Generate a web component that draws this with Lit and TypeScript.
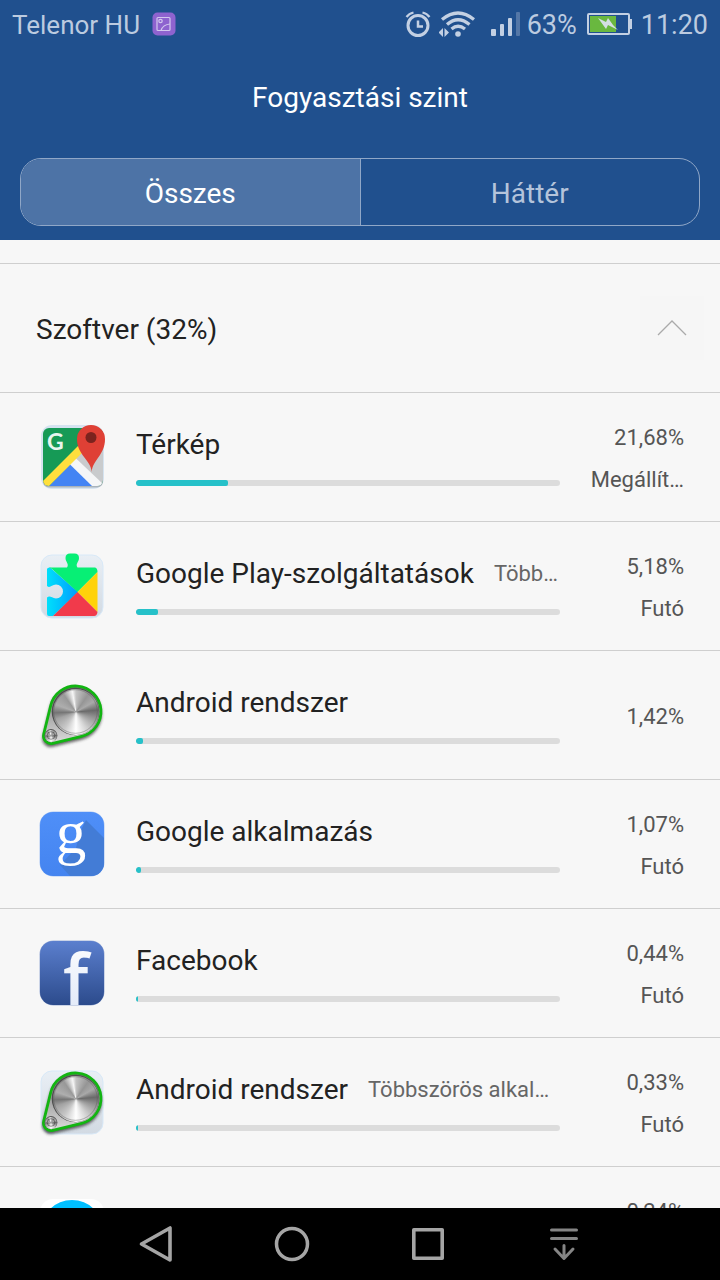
import { LitElement, html, css, nothing, type TemplateResult } from "lit";
import { customElement, property, state } from "lit/decorators.js";
import { classMap } from "lit/directives/class-map.js";
import { styleMap } from "lit/directives/style-map.js";

interface AppUsage {
  name: string;
  note?: string;
  percent: string;
  status?: string;
  fill: number;
  icon: string;
}

const APPS: AppUsage[] = [
  { name: "Térkép", percent: "21,68%", status: "Megállít…", fill: 21.68, icon: "maps" },
  { name: "Google Play-szolgáltatások", note: "Több…", percent: "5,18%", status: "Futó", fill: 5.18, icon: "play" },
  { name: "Android rendszer", percent: "1,42%", fill: 1.65, icon: "system" },
  { name: "Google alkalmazás", percent: "1,07%", status: "Futó", fill: 1.2, icon: "google" },
  { name: "Facebook", percent: "0,44%", status: "Futó", fill: 0.48, icon: "facebook" },
  { name: "Android rendszer", note: "Többszörös alkal…", percent: "0,33%", status: "Futó", fill: 0.48, icon: "systemTile" },
  { name: "", percent: "0,24%", status: "\u00a0", fill: 0.24, icon: "blue" },
];

const tile = html`<svg viewBox="0 0 72 72"><rect x="5" y="5" width="62" height="63" rx="11" fill="url(#tileFill)" stroke="#d8e9f8"/><defs><linearGradient id="tileFill" x1="0" y1="0" x2="0" y2="1"><stop offset="0" stop-color="#e9eff5"/><stop offset="1" stop-color="#d2dae3"/></linearGradient></defs></svg>`;

const knob = html`
  <svg viewBox="0 0 72 72">
    <defs>
      <filter id="soft" x="-20%" y="-20%" width="140%" height="140%"><feGaussianBlur stdDeviation="1.8"/></filter>
      <linearGradient id="plate" x1="0" y1="0" x2="0" y2="1"><stop offset="0" stop-color="#6f6f6f"/><stop offset="1" stop-color="#dcdcdc"/></linearGradient>
    </defs>
    <path d="M7.700 57.200 L14.700 28.500 A25.500 25.500 0 1 1 45.500 59.800 L16.800 66.800 A7.500 7.500 0 0 1 7.700 57.200Z" fill="#333" stroke="#333" stroke-width="2" opacity=".75" filter="url(#soft)"/>
    <path d="M7.700 55.200 L14.700 26.500 A25.500 25.500 0 1 1 45.500 57.300 L16.800 64.300 A7.500 7.500 0 0 1 7.700 55.200Z" fill="url(#plate)" stroke="#12b512" stroke-width="2.800"/>
    <circle cx="39.500" cy="32.500" r="23.800" fill="#4f4f4f"/>
    <foreignObject x="16.500" y="9.500" width="46" height="46"><div class="metal"></div></foreignObject>
    <circle cx="39.500" cy="32.500" r="21.800" fill="none" stroke="#555" stroke-opacity=".4"/>
    <circle cx="15" cy="56.500" r="6.400" fill="#555"/>
    <foreignObject x="9" y="50.500" width="12" height="12"><div class="metal"></div></foreignObject>
    <circle cx="15" cy="56.500" r="3.800" fill="none" stroke="#333" stroke-opacity=".5"/>
  </svg>`;

const ICONS: Record<string, TemplateResult> = {
  maps: html`<svg viewBox="0 0 72 72">
    <defs><clipPath id="mapClip"><rect x="7" y="7" width="60" height="58" rx="6"/></clipPath></defs>
    <rect x="5" y="4" width="63" height="64" rx="11" fill="#d5e3f0"/>
    <rect x="7" y="8" width="60" height="58.500" rx="6" fill="#a9b3bb"/>
    <g clip-path="url(#mapClip)">
      <rect x="7" y="7" width="60" height="60" fill="#169a56"/>
      <path d="M37 38 L52 22 H67 V66 H58Z" fill="#c9cbcd"/>
      <path d="M12 66 L37 40 L62 66Z" fill="#4384f4"/>
      <path d="M32 41.500 L38 35.500 L69 65 H56Z" fill="#f5f6f7"/>
      <path d="M5 62 L48 19 L54 24 L11 67Z" fill="#ffdf3d"/>
    </g>
    <text class="maps-g" x="11" y="29">G</text>
    <path d="M55.700 51 C55 39 41 34 41 18 A14 14 0 0 1 69 18 C69 34 56.500 39 55.700 51Z" fill="#df4035"/>
    <circle cx="55" cy="16.500" r="5.500" fill="#7b231e"/>
  </svg>`,
  play: html`<svg viewBox="0 0 72 72">
    <defs>
      <linearGradient id="pl1" x1="0" y1="0" x2="0" y2="1"><stop offset="0" stop-color="#e9eff5"/><stop offset="1" stop-color="#d2dae3"/></linearGradient>
      <linearGradient id="pl2" x1="0" y1="0" x2="1" y2="0"><stop offset="0" stop-color="#00e0fb"/><stop offset="1" stop-color="#009bff"/></linearGradient>
    </defs>
    <rect x="5" y="5" width="62" height="63" rx="11" fill="url(#pl1)" stroke="#d8e9f8"/>
    <path d="M14 17.500 L42 42 L17 66 H13 Q11 66 11 64 V47.500 C14 45 15.500 48 20 48.500 A7 7 0 0 0 20 34.500 C15.500 35 14 38.500 11 36 V19.500 Q11 17.500 14 17.500Z" fill="url(#pl2)"/>
    <path d="M13 17.500 H31 C33.500 14 29.500 12 29.500 8 Q29.500 3.500 34 3.500 H38.500 Q43 3.500 43 8 C43 12 39 14 41.500 17.500 H59 Q61.500 18 61.500 22 L41.500 42 L16 19Z" fill="#07ef75"/>
    <path d="M61.500 22 V62 L41.500 42Z" fill="#ffd20a"/>
    <path d="M41.500 42 L61.500 62 Q61 66 58 66 H17Z" fill="#f13a4b"/>
  </svg>`,
  system: knob,
  systemTile: html`${tile}${knob}`,
  google: html`<svg viewBox="0 0 72 72">
    <defs>
      <clipPath id="gClip"><rect x="4" y="4" width="64" height="64" rx="13"/></clipPath>
      <linearGradient id="gFill" x1="0" y1="0" x2="0" y2="1"><stop offset="0" stop-color="#4f8ff8"/><stop offset="1" stop-color="#4484f0"/></linearGradient>
    </defs>
    <rect x="3.500" y="3.500" width="65" height="65" rx="14" fill="#a9c6f3"/>
    <g clip-path="url(#gClip)"><rect x="4" y="4" width="64" height="64" fill="url(#gFill)"/><path d="M50 12 L68 30 V68 H34 L24 57 L40 40 L44 24Z" fill="#437cd6"/></g>
    <text class="google-g" x="35" y="45" text-anchor="middle">g</text>
  </svg>`,
  facebook: html`<svg viewBox="0 0 72 72">
    <defs>
      <clipPath id="fClip"><rect x="4" y="4" width="64" height="64" rx="13"/></clipPath>
      <linearGradient id="fFill" x1="0" y1="0" x2="0" y2="1"><stop offset="0" stop-color="#5b7fce"/><stop offset="1" stop-color="#2c4b8c"/></linearGradient>
      <linearGradient id="fText" x1="0" y1="0" x2="0" y2="1"><stop offset="0" stop-color="#fff"/><stop offset="1" stop-color="#dde6f7"/></linearGradient>
    </defs>
    <rect x="3.500" y="3.500" width="65" height="65" rx="14" fill="#9fb1d8"/>
    <g clip-path="url(#fClip)"><rect x="4" y="4" width="64" height="64" fill="url(#fFill)"/>
    <text class="facebook-f" x="27" y="68" fill="url(#fText)">f</text></g>
  </svg>`,
  blue: html`<svg viewBox="0 0 72 72"><rect x="4" y="4" width="64" height="64" rx="13" fill="#fff"/><circle cx="36" cy="36" r="31" fill="#00bfff"/></svg>`,
};

@customElement("usage-row")
export class UsageRow extends LitElement {
  @property({ attribute: false }) app!: AppUsage;

  static styles = css`
    :host { display: block; border-bottom: 1px solid #cfcfcf; }
    .row { display: flex; align-items: center; height: 128px; padding: 0 36px; }
    .icon { display: grid; flex: none; width: 72px; height: 72px; margin-right: 28px; }
    .icon svg { grid-area: 1 / 1; width: 72px; height: 72px; overflow: visible; }
    .metal {
      width: 100%; height: 100%; border-radius: 50%;
      background: conic-gradient(from 0deg, #c4c4c4, #959595 35deg, #a9a9a9 60deg, #6a6a6a 85deg, #999 110deg, #d6d6d6 150deg, #fff 180deg, #c8c8c8 215deg, #a2a2a2 250deg, #757575 268deg, #aeaeae 290deg, #989898 325deg, #f6f6f6 350deg, #c4c4c4 360deg);
    }
    .maps-g { font: 700 23px Lato, sans-serif; fill: #e8f5ee; }
    .google-g { font: 61px "Liberation Serif", serif; fill: #fff; }
    .facebook-f { font: 600 70px "Open Sans", sans-serif; }
    .main { flex: 1; min-width: 0; padding-bottom: 2px; }
    .line { display: flex; align-items: center; gap: 20px; height: 36px; margin-bottom: 18px; white-space: nowrap; }
    .name { font-size: 28px; color: #222; }
    .note { font-size: 22px; color: #666; }
    .bar { height: 6px; border-radius: 3px; background: #dcdcdc; overflow: hidden; }
    .fill { height: 6px; border-radius: 2px; background: #26c1c9; }
    .side { width: 124px; flex: none; padding-top: 4px; font-size: 22px; line-height: 42px; text-align: right; color: #555; white-space: nowrap; }
  `;

  render() {
    const a = this.app;
    return html`<div class="row">
      <div class="icon" aria-hidden="true">${ICONS[a.icon]}</div>
      <div class="main">
        <div class="line"><span class="name">${a.name}</span>${a.note ? html`<span class="note">${a.note}</span>` : nothing}</div>
        <div class="bar"><div class="fill" style=${styleMap({ width: `${a.fill}%` })}></div></div>
      </div>
      <div class="side"><div>${a.percent}</div>${a.status ? html`<div>${a.status}</div>` : nothing}</div>
    </div>`;
  }
}

@customElement("app-root")
export class AppRoot extends LitElement {
  @state() private tab = 0;
  @state() private open = true;

  static styles = css`
    :host {
      display: flex; flex-direction: column; height: 100vh; overflow: hidden;
      background: #f7f7f7; font-family: Roboto, sans-serif; color: #222;
    }
    button { font: inherit; color: inherit; background: none; border: 0; padding: 0; margin: 0; cursor: pointer; }
    svg { display: block; }
    .header { flex: none; background: #20508e; padding-bottom: 14px; }
    .status { display: flex; align-items: center; height: 48px; padding: 0 12px; font-size: 27px; color: #bccbe0; }
    .status span { padding-top: 2px; }
    .carrier { margin-right: 12px; font-size: 26px; }
    .tray { display: flex; align-items: center; margin-left: auto; }
    .wifi { margin-left: 8px; }
    .signal { margin: 0 6px 0 16px; }
    .battery { margin: 0 9px 0 10px; }
    .title { margin: 0; padding: 2px 0 12px; font-size: 28px; font-weight: 400; line-height: 96px; text-align: center; color: #fff; }
    .tabs { display: flex; height: 66px; margin: 0 20px; border: 1px solid #90a7c7; border-radius: 21px; overflow: hidden; }
    .tab { flex: 1; padding-top: 2px; font-size: 28px; color: #b4c4db; }
    .tab + .tab { border-left: 1px solid #90a7c7; }
    .tab.on { background: #4d73a6; color: #fff; }
    .content { flex: 1; min-height: 0; overflow: hidden; padding-top: 23px; }
    .group { display: flex; align-items: center; justify-content: space-between; height: 128px; padding: 0 16px 0 36px; border: solid #cfcfcf; border-width: 1px 0; }
    .group h2 { margin: 0; padding-top: 2px; font-size: 28px; font-weight: 400; }
    .toggle { display: grid; place-items: center; width: 64px; height: 64px; background: #f6f6f6; }
    .nav { flex: none; display: flex; justify-content: center; height: 72px; background: #000; }
    .nav button { display: grid; place-items: center; width: 136px; }
  `;

  render() {
    return html`
      <header class="header">
        <div class="status">
          <span class="carrier">Telenor HU</span>
          <svg width="24" height="24" viewBox="0 0 24 24" fill="none" aria-hidden="true">
            <rect x=".5" y=".5" width="23" height="23" rx="5" fill="#8e63cf"/>
            <g stroke="#d2c8ee" stroke-width="1.200"><rect x="5" y="5.500" width="13" height="13" rx="1"/><circle cx="8.500" cy="9" r="1.700"/><path d="M9 18.500 Q11 12.500 18 12"/></g>
          </svg>
          <div class="tray">
            <svg width="26" height="28" viewBox="0 0 26 28" fill="none" stroke="#c3d0e3" aria-hidden="true">
              <circle cx="13" cy="15.500" r="10" stroke-width="3"/><path d="M13 10.500 V16.500 H18" stroke-width="2.500"/>
              <path d="M1.500 7 Q4 3.500 8.500 2.500 M24.500 7 Q22 3.500 17.500 2.500" stroke-width="2.200"/>
            </svg>
            <svg class="wifi" width="36" height="28" viewBox="0 0 36 28" fill="none" stroke="#c3d0e3" aria-hidden="true">
              <path d="M3 9.500 Q19 -3.500 35 9.500" stroke-width="3.300"/><path d="M8 14.500 Q19 5 30.500 14.500" stroke-width="3.300"/><path d="M12.500 19 Q19 13.500 26 19" stroke-width="3.300"/>
              <circle cx="19" cy="24" r="2.800" fill="#c3d0e3" stroke="none"/>
              <path d="M-.5 22.500 L4 18 V27Z M5.500 18 L10 22.500 L5.500 27Z" fill="#c3d0e3" stroke="none"/>
            </svg>
            <svg class="signal" width="30" height="26" viewBox="0 0 30 26" fill="#c3d0e3" aria-hidden="true">
              <rect x="0" y="18" width="5" height="7" rx="1"/><rect x="9" y="13" width="4" height="12" rx="1"/><rect x="17" y="7" width="4" height="18" rx="1"/><rect x="25" y="1" width="4" height="24" rx="1" fill="#5477a7"/>
            </svg>
            <span>63%</span>
            <svg class="battery" width="45" height="22" viewBox="0 0 45 22" aria-hidden="true">
              <rect x="1" y="1" width="41" height="20" rx="1" fill="none" stroke="#c3d0e3" stroke-width="2"/><rect x="43" y="6" width="2" height="10" fill="#c3d0e3"/>
              <rect x="3" y="3" width="26" height="16" fill="#69b83f"/><path d="M11 5 L19 9 L21 5 L26 12 L31 17 L21 12 L19 16Z" fill="#d3dfe2"/>
            </svg>
            <span>11:20</span>
          </div>
        </div>
        <h1 class="title">Fogyasztási szint</h1>
        <div class="tabs" role="tablist">
          ${["Összes", "Háttér"].map((label, i) => html`<button role="tab" aria-selected=${this.tab === i} class=${classMap({ tab: true, on: this.tab === i })} @click=${() => (this.tab = i)}>${label}</button>`)}
        </div>
      </header>
      <main class="content">
        <div class="group">
          <h2>Szoftver (32%)</h2>
          <button class="toggle" aria-label="Szoftver" aria-expanded=${this.open} @click=${() => (this.open = !this.open)}>
            <svg width="30" height="18" viewBox="0 0 30 18" fill="none" stroke="#aaa" stroke-width="1.300"><path d="M1 16 L15 2 L29 16"/></svg>
          </button>
        </div>
        ${this.open ? APPS.map((a) => html`<usage-row .app=${a}></usage-row>`) : nothing}
      </main>
      <nav class="nav">
        <button aria-label="Vissza"><svg width="36" height="40" viewBox="0 0 36 40" fill="none" stroke="#a5a5a5" stroke-width="3.600" stroke-linejoin="round"><path d="M32 4 V36 L3.500 20Z"/></svg></button>
        <button aria-label="Kezdőlap"><svg width="36" height="36" viewBox="0 0 36 36" fill="none" stroke="#a5a5a5" stroke-width="3.500"><circle cx="18" cy="18" r="15.500"/></svg></button>
        <button aria-label="Legutóbbiak"><svg width="32" height="32" viewBox="0 0 32 32" fill="none" stroke="#a5a5a5" stroke-width="3.600" stroke-linejoin="round"><rect x="1.800" y="1.800" width="28.400" height="28.400"/></svg></button>
        <button aria-label="Értesítések"><svg width="28" height="34" viewBox="0 0 28 34" fill="none" stroke="#858585" stroke-width="3" stroke-linecap="round" stroke-linejoin="round"><path d="M1.500 3 H26.500 M1.500 11.500 H26.500 M14 18.500 V31 M5 22 L14 31.500 L23 22"/></svg></button>
      </nav>`;
  }
}
